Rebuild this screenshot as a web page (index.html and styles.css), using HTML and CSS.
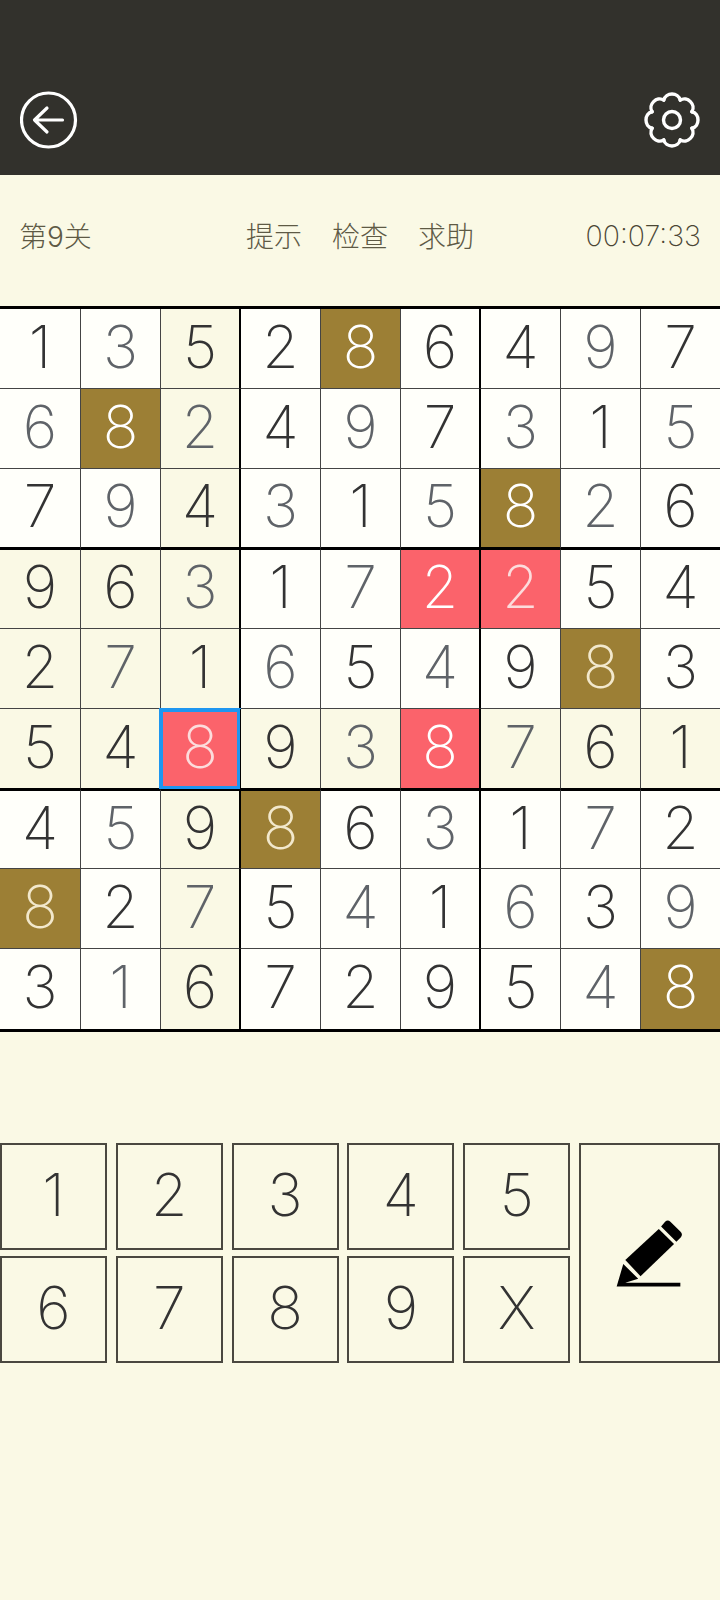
FILE: index.html
```html
<!DOCTYPE html>
<html lang="zh">
<head>
  <meta charset="UTF-8">
  <meta name="viewport" content="width=device-width, initial-scale=1.0">
  <title>数独</title>
  <link rel="stylesheet" href="styles.css">
</head>
<body>
  <div class="topbar">
    <svg class="top-icon" viewBox="0 0 60 60" fill="none" stroke="#fff" stroke-width="3.2" stroke-linecap="round" stroke-linejoin="round">
      <circle cx="28.500" cy="30" r="27"/>
      <path d="M42.500 30H14.500M27 18L14.500 30L27 42"/>
    </svg>
    <svg class="top-icon" viewBox="0 0 60 60" fill="none" stroke="#fff" stroke-width="3.4" stroke-linecap="round" stroke-linejoin="round">
      <path d="M21.770 10.140C23.500 1.950 36.500 1.950 38.230 10.140"/>
      <path d="M21.770 10.140C23.500 1.950 36.500 1.950 38.230 10.140" transform="rotate(45 30 30)"/>
      <path d="M21.770 10.140C23.500 1.950 36.500 1.950 38.230 10.140" transform="rotate(90 30 30)"/>
      <path d="M21.770 10.140C23.500 1.950 36.500 1.950 38.230 10.140" transform="rotate(135 30 30)"/>
      <path d="M21.770 10.140C23.500 1.950 36.500 1.950 38.230 10.140" transform="rotate(180 30 30)"/>
      <path d="M21.770 10.140C23.500 1.950 36.500 1.950 38.230 10.140" transform="rotate(225 30 30)"/>
      <path d="M21.770 10.140C23.500 1.950 36.500 1.950 38.230 10.140" transform="rotate(270 30 30)"/>
      <path d="M21.770 10.140C23.500 1.950 36.500 1.950 38.230 10.140" transform="rotate(315 30 30)"/>
      <circle cx="30" cy="30" r="8.500"/>
    </svg>
  </div>

  <div class="infobar">
    <span class="level">第9关</span>
    <div class="actions">
      <span>提示</span>
      <span>检查</span>
      <span>求助</span>
    </div>
    <span class="timer">00:07:33</span>
  </div>

  <div class="board">
    <div class="cell">1</div><div class="cell user">3</div><div class="cell tint">5</div><div class="cell">2</div><div class="cell same">8</div><div class="cell">6</div><div class="cell">4</div><div class="cell user">9</div><div class="cell">7</div>
    <div class="cell user">6</div><div class="cell same">8</div><div class="cell user tint">2</div><div class="cell">4</div><div class="cell user">9</div><div class="cell">7</div><div class="cell user">3</div><div class="cell">1</div><div class="cell user">5</div>
    <div class="cell">7</div><div class="cell user">9</div><div class="cell tint">4</div><div class="cell user">3</div><div class="cell">1</div><div class="cell user">5</div><div class="cell same">8</div><div class="cell user">2</div><div class="cell">6</div>
    <div class="cell tint">9</div><div class="cell tint">6</div><div class="cell user tint">3</div><div class="cell">1</div><div class="cell user">7</div><div class="cell error">2</div><div class="cell error fixed">2</div><div class="cell">5</div><div class="cell">4</div>
    <div class="cell tint">2</div><div class="cell user tint">7</div><div class="cell tint">1</div><div class="cell user">6</div><div class="cell">5</div><div class="cell user">4</div><div class="cell">9</div><div class="cell same fixed">8</div><div class="cell">3</div>
    <div class="cell tint">5</div><div class="cell tint">4</div><div class="cell error selected">8</div><div class="cell tint">9</div><div class="cell user tint">3</div><div class="cell error">8</div><div class="cell user tint">7</div><div class="cell tint">6</div><div class="cell tint">1</div>
    <div class="cell">4</div><div class="cell user">5</div><div class="cell tint">9</div><div class="cell same fixed">8</div><div class="cell">6</div><div class="cell user">3</div><div class="cell">1</div><div class="cell user">7</div><div class="cell">2</div>
    <div class="cell same fixed">8</div><div class="cell">2</div><div class="cell user tint">7</div><div class="cell">5</div><div class="cell user">4</div><div class="cell">1</div><div class="cell user">6</div><div class="cell">3</div><div class="cell user">9</div>
    <div class="cell">3</div><div class="cell user">1</div><div class="cell tint">6</div><div class="cell">7</div><div class="cell">2</div><div class="cell">9</div><div class="cell">5</div><div class="cell user">4</div><div class="cell same">8</div>
  </div>

  <div class="keypad">
    <div class="key">1</div>
    <div class="key">2</div>
    <div class="key">3</div>
    <div class="key">4</div>
    <div class="key">5</div>
    <div class="key pencil">
      <svg viewBox="525 262 205 210" width="68" height="70" fill="#000">
        <path d="M556 388L657 295L703 340L602 437Z"/>
        <path d="M664 287L676 273Q684 265 692 273L722 302Q731 311 723 320L710 333Z"/>
        <path d="M550 400L595 445L556 457H722V468H530Z"/>
      </svg>
    </div>
    <div class="key">6</div>
    <div class="key">7</div>
    <div class="key">8</div>
    <div class="key">9</div>
    <div class="key">X</div>
  </div>
</body>
</html>
```

FILE: styles.css
```css
body {
  margin: 0;
  height: 1600px;
  background: #faf9e5;
  font-family: Inter, "Noto Sans CJK SC", sans-serif;
  font-weight: 200;
  color: #333;
}

.topbar {
  height: 175px;
  box-sizing: border-box;
  background: #32312c;
  padding: 90px 18px 0 20px;
  display: flex;
  justify-content: space-between;
  align-items: flex-start;
}
.top-icon {
  width: 60px;
  height: 60px;
}

.infobar {
  height: 131px;
  box-sizing: border-box;
  padding: 0 19px 12px;
  display: grid;
  grid-template-columns: 1fr auto 1fr;
  align-items: center;
  font-size: 28px;
  font-weight: 300;
  color: #5e5a45;
}
.actions {
  display: flex;
  gap: 30px;
}
.timer {
  padding-top: 2px;
  font-size: 28.500px;
  font-weight: 200;
  color: #4a4634;
  text-align: right;
}

.board {
  display: grid;
  grid-template-columns: repeat(9, 80px);
  grid-auto-rows: 80px;
  border-top: 3px solid #000;
  border-bottom: 3px solid #000;
  background: #fffffa;
}
.cell {
  box-sizing: border-box;
  border-left: 1px solid #444;
  border-bottom: 1px solid #444;
  padding-bottom: 5px;
  display: flex;
  justify-content: center;
  align-items: center;
  font-size: 59px;
  color: #333;
}
.cell:nth-child(9n+1) {
  border-left: 0;
}
/* box lines sit across two neighbouring cells */
.cell:nth-child(9n+3), .cell:nth-child(9n+6) {
  border-right: 1px solid #000;
}
.cell:nth-child(9n+4), .cell:nth-child(9n+7) {
  border-left: 1px solid #000;
}
.cell:nth-child(n+19):nth-child(-n+27) {
  border-bottom: 2px solid #000;
}
.cell:nth-child(n+28):nth-child(-n+36) {
  border-top: 1px solid #000;
}
.cell:nth-child(n+46):nth-child(-n+54) {
  border-bottom: 1px solid #000;
}
.cell:nth-child(n+55):nth-child(-n+63) {
  border-top: 2px solid #000;
}
.cell:nth-child(n+73) {
  border-bottom: 0;
}
.tint {
  background: #faf9e5;
}
.user {
  color: #5f6368;
}
.same {
  background: #9c7f35;
  color: #fff;
}
.same.fixed {
  color: #f2e8cc;
}
.error {
  background: #fb636b;
  color: #fff;
}
.error.fixed, .selected {
  color: #fcdcdc;
}
.selected {
  outline: 4px solid #1e96f0;
  outline-offset: -3px;
}

.keypad {
  margin-top: 111px;
  display: grid;
  grid-template-columns: repeat(5, 107px) 141px;
  grid-auto-rows: 107px;
  column-gap: 8.800px;
  row-gap: 6px;
}
.key {
  box-sizing: border-box;
  border: 2px solid #4a4840;
  padding-bottom: 4px;
  display: flex;
  justify-content: center;
  align-items: center;
  font-size: 59px;
  color: #333;
}
.pencil {
  grid-column: 6;
  grid-row: 1 / span 2;
  padding-bottom: 0;
}
```
